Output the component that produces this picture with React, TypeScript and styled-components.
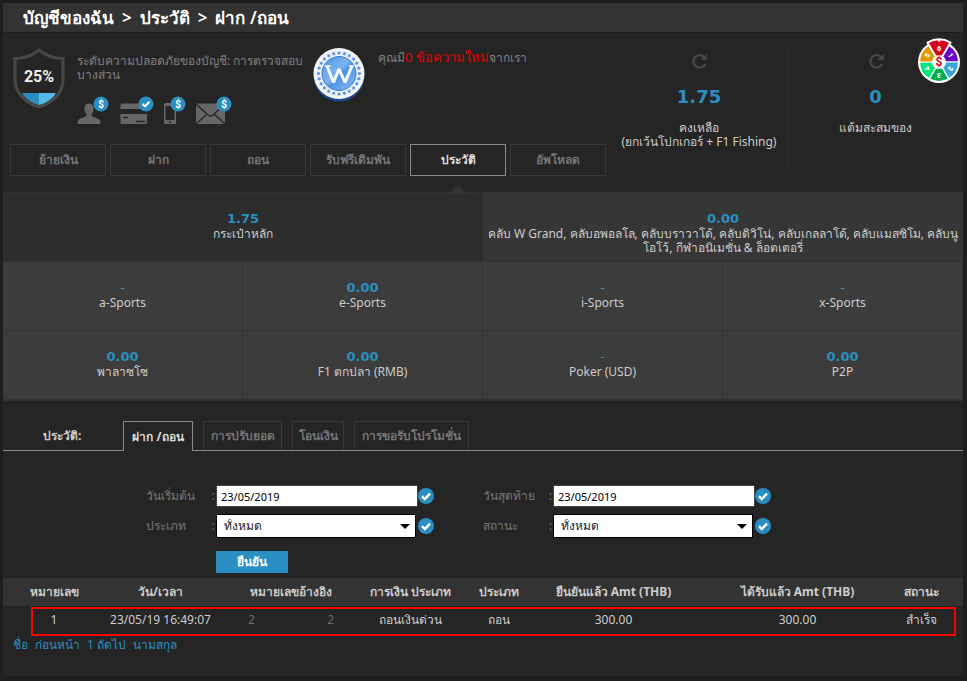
import React from "react";
import styled, { createGlobalStyle, css } from "styled-components";

const blue = "#2a8fc0";
const sans = `"Noto Sans", "DejaVu Sans", sans-serif`;
const bold = `"DejaVu Sans", "Noto Sans", sans-serif`;

const GlobalStyle = createGlobalStyle`
  *, *::before, *::after { box-sizing: border-box; }
  body {
    margin: 0;
    background: #1e1e1e;
    color: #ccc;
    font: 12px/14px ${sans};
  }
  button, input, select { font: inherit; }
`;

const Page = styled.main`
  margin: 3px 4px 5px 3px;
  min-height: calc(100vh - 8px);
  background: #252525;
`;

const TitleBar = styled.h1`
  display: flex;
  gap: 8px;
  margin: 0;
  height: 30px;
  padding-left: 20px;
  background: #333;
  border-bottom: 1px solid #1c1c1c;
  color: #fff;
  font-size: 17px;
  line-height: 30px;
  font-weight: 600;
`;

const Summary = styled.section`
  position: relative;
  display: flex;
  height: 159px;
`;

const Account = styled.div`
  flex: 1;
  display: flex;
  flex-direction: column;
  min-width: 0;
  padding-left: 7px;
`;

const AccountInfo = styled.div`
  display: flex;
  height: 111px;
  padding: 13px 0 0 3px;
`;

const Shield = styled.svg`
  flex: none;
  width: 52px;
  height: 64px;
`;

const Security = styled.div`
  flex: none;
  width: 248px;
  padding: 8px 8px 0 12px;
  color: #808080;
`;

const SecurityText = styled.p`
  margin: 0;
`;

const Verifications = styled.div`
  display: flex;
  margin-top: 14px;
`;

const VerifyIcon = styled.svg<{ $gap: number }>`
  flex: none;
  display: block;
  height: 30px;
  margin-right: ${(p) => p.$gap}px;
`;

const Medal = styled.svg`
  flex: none;
  width: 54px;
  height: 56px;
`;

const Message = styled.p`
  margin: 0;
  padding: 4px 0 0 11px;
  color: #808080;
  white-space: nowrap;
`;

const MessageLink = styled.a`
  color: #e60000;
  font-size: 13px;
  text-decoration: none;
`;

const Nav = styled.nav`
  display: flex;
  gap: 4px;
`;

const NavButton = styled.button<{ $active?: boolean }>`
  position: relative;
  width: 96px;
  height: 32px;
  padding: 0;
  background: transparent;
  border: 1px solid ${(p) => (p.$active ? "#8a8a8a" : "#383838")};
  color: ${(p) => (p.$active ? "#ddd" : "#757575")};
  font-weight: 700;
  ${(p) =>
    p.$active &&
    css`
      &::after {
        content: "";
        position: absolute;
        left: 38px;
        top: 40px;
        border: 9px solid transparent;
        border-top: 0;
        border-bottom-color: #333;
      }
    `}
`;

const Stat = styled.div`
  flex: none;
  width: 176px;
  height: 120px;
  margin-top: 12px;
  padding-top: 7px;
  display: flex;
  flex-direction: column;
  align-items: center;
  text-align: center;
  white-space: nowrap;
  & + & {
    border-left: 1px solid #303030;
  }
`;

const RefreshButton = styled.button`
  display: block;
  width: 18px;
  height: 18px;
  padding: 0;
  border: 0;
  background: transparent;
  svg {
    display: block;
  }
`;

const StatValue = styled.strong`
  margin: 16px 0 13px;
  color: ${blue};
  font: 700 18px/22px ${bold};
`;

const Wheel = styled.svg`
  position: absolute;
  top: 3px;
  right: 2px;
  width: 44px;
  height: 48px;
`;

const Wallets = styled.section`
  display: grid;
  grid-template-columns: repeat(4, 1fr);
  grid-auto-rows: 68px;
  row-gap: 1px;
  padding: 1px 0 2px;
  background: #333;
`;

const Wallet = styled.div<{ $tone?: "main" | "club" }>`
  grid-column: span ${(p) => (p.$tone ? 2 : 1)};
  padding-top: 18px;
  border-right: ${(p) => (p.$tone ? 0 : 1)}px solid #333;
  background: ${(p) =>
    p.$tone === "main" ? "#2d2d2d" : p.$tone === "club" ? "#363636" : "#3c3c3c"};
  text-align: center;
`;

const WalletValue = styled.strong<{ $empty: boolean }>`
  display: block;
  color: ${blue};
  font: ${(p) => (p.$empty ? 400 : 700)} 13px/16px ${bold};
`;

const WalletName = styled.span`
  display: block;
`;

const TabBar = styled.div`
  display: flex;
  align-items: flex-end;
  gap: 10px;
  height: 50px;
  border-bottom: 1px solid #8a8a8a;
`;

const TabLabel = styled.h2`
  width: 110px;
  margin: 0;
  padding: 0 0 7px 40px;
  font-size: 12px;
  line-height: 14px;
  font-weight: 700;
`;

const Tab = styled.button<{ $active?: boolean; $width: number }>`
  width: ${(p) => p.$width}px;
  height: ${(p) => (p.$active ? 30 : 29)}px;
  margin-bottom: ${(p) => (p.$active ? -1 : 0)}px;
  padding: 0;
  background: #252525;
  border: 1px solid ${(p) => (p.$active ? "#8a8a8a" : "#383838")};
  border-bottom: 0;
  color: ${(p) => (p.$active ? "#ddd" : "#757575")};
  font-weight: 700;
  white-space: nowrap;
`;

const Filters = styled.form`
  display: grid;
  grid-template-columns: 289px 289px;
  grid-template-rows: 24px 24px 30px;
  align-items: end;
  column-gap: 48px;
  row-gap: 6px;
  padding: 33px 0 4px 143px;
`;

const Field = styled.div`
  display: flex;
  align-items: center;
  height: 24px;
`;

const FieldLabel = styled.label`
  flex: none;
  display: flex;
  justify-content: space-between;
  width: 70px;
  padding-right: 1px;
  color: #777;
`;

const Control = styled.div`
  position: relative;
  width: 202px;
`;

const DateInput = styled.input`
  display: block;
  width: 202px;
  height: 22px;
  padding: 0 4px;
  border: 1px solid #444;
  background: #fff;
  color: #000;
  font-size: 11px;
`;

const Select = styled.select`
  display: block;
  width: 200px;
  height: 24px;
  padding: 0 7px;
  appearance: none;
  border: 1px solid #000;
  border-radius: 0;
  background: #fff;
  color: #222;
`;

const Caret = styled.svg`
  position: absolute;
  top: 10px;
  right: 8px;
  width: 10px;
  height: 5px;
  pointer-events: none;
`;

const Submit = styled.button`
  width: 72px;
  height: 22px;
  margin-left: 70px;
  padding: 0;
  border: 0;
  background: ${blue};
  color: #fff;
  font-weight: 700;
`;

const TableFrame = styled.div`
  position: relative;
  &::after {
    content: "";
    position: absolute;
    top: 29px;
    left: 28px;
    right: 7px;
    height: 29px;
    border: 2px solid #ff0000;
    pointer-events: none;
  }
`;

const Table = styled.table`
  width: 100%;
  table-layout: fixed;
  border-collapse: collapse;
  text-align: center;
  white-space: nowrap;
  thead {
    background: #333;
  }
  th,
  td {
    height: 28px;
    padding: 0;
  }
  th {
    font-weight: 700;
  }
  th:nth-child(7),
  td:nth-child(7) {
    padding-left: 32px;
  }
`;

const Col = styled.col<{ $width: number }>`
  width: ${(p) => p.$width / 9.6}%;
`;

const MaskedNumber = styled.span`
  display: flex;
  justify-content: space-between;
  width: 86px;
  margin: 0 auto;
  color: #6c6c6c;
`;

const Pager = styled.nav`
  display: flex;
  gap: 7px;
  padding: 4px 10px;
`;

const PageLink = styled.a`
  color: ${blue};
  text-decoration: none;
`;

const Badge = ({ x, check }: { x: number; check?: boolean }) => (
  <g transform={`translate(${x} 8)`}>
    <circle r="7.5" fill={blue} />
    {check ? (
      <path d="M-3.4 0 -1 2.4 3.4-2.2" fill="none" stroke="#fff" strokeWidth="2" />
    ) : (
      <text y="3.6" fill="#fff" fontFamily="Roboto" fontWeight="700" fontSize="10" textAnchor="middle">
        $
      </text>
    )}
  </g>
);

const CheckMark = () => (
  <svg width="16" height="16" viewBox="0 0 16 16" aria-hidden="true">
    <circle cx="8" cy="8" r="8" fill={blue} />
    <path d="M4 8.2 6.8 11 12 5.6" fill="none" stroke="#fff" strokeWidth="2.4" />
  </svg>
);

const Refresh = () => (
  <RefreshButton type="button" aria-label="รีเฟรช">
    <svg width="18" height="18" viewBox="0 0 18 18">
      <path d="M15.200 12A6.200 6.200 0 1 1 14 5" fill="none" stroke="#474747" strokeWidth="2.4" />
      <path d="M16.800 1.600V8H10.400Z" fill="#474747" />
    </svg>
  </RefreshButton>
);

const sectors = ["#d6001c", "#6a00c8", "#36a6d8", "#00b050", "#00e676", "#e09a00"];
const point = (deg: number, r: number) => {
  const a = (deg * Math.PI) / 180;
  return `${(22 + r * Math.sin(a)).toFixed(2)} ${(26 - r * Math.cos(a)).toFixed(2)}`;
};

const PrizeWheel = () => (
  <Wheel viewBox="0 0 44 48" aria-label="วงล้อ">
    <circle cx="22" cy="26" r="21" fill="#fff" />
    {sectors.map((fill, i) =>
      i === 0 ? null : (
        <g key={fill}>
          <path
            d={`M22 26 L${point(i * 60 - 30, 19.5)} A19.5 19.5 0 0 1 ${point(i * 60 + 30, 19.5)}Z`}
            fill={fill}
            stroke="#fff"
            strokeWidth="1.2"
          />
          <text
            x="22"
            y="15"
            transform={`rotate(${i * 60} 22 26)`}
            fill="#fff"
            fontFamily="Roboto"
            fontWeight="900"
            fontSize="7"
            textAnchor="middle"
          >
            {i}
          </text>
        </g>
      )
    )}
    <path
      d="M10.500 6.500A23 23 0 0 1 33.500 6.500L22 26Z"
      fill={sectors[0]}
      stroke="#fff"
      strokeWidth="2"
      strokeLinejoin="round"
    />
    <path d="M20.400 3.400h3.200L22 6.400Z" fill="#fff" />
    <text x="22" y="15" fill="#fff" fontFamily="Roboto" fontWeight="900" fontSize="7" textAnchor="middle">
      6
    </text>
    <circle cx="22" cy="26" r="7" fill="#fff" />
    <text x="22" y="30" fill="#d6001c" fontFamily="Roboto" fontWeight="700" fontSize="12" textAnchor="middle">
      $
    </text>
  </Wheel>
);

const star = "M0-2.4.7-.8 2.3-.7 1 .3 1.5 2 0 1-1.5 2-1 .3-2.3-.7-.7-.8Z";

const Medallion = () => (
  <Medal viewBox="0 0 54 56" aria-label="W">
    <defs>
      <linearGradient id="medal" x1="0" y1="0" x2="1" y2="1">
        <stop offset="0" stopColor="#4b8fe0" />
        <stop offset=".45" stopColor="#7db5f2" />
        <stop offset=".55" stopColor="#4f93e4" />
        <stop offset="1" stopColor="#8cc0f5" />
      </linearGradient>
    </defs>
    <circle cx="26" cy="30" r="25.500" fill="#174a8c" />
    <circle cx="26" cy="27.500" r="25.500" fill="#f3f3f3" />
    {Array.from({ length: 24 }, (_, i) => (
      <path key={i} d={star} fill="#4b8fe8" transform={`rotate(${i * 15} 26 27.5) translate(26 7)`} />
    ))}
    <circle cx="26" cy="27.500" r="17" fill="url(#medal)" stroke="#3d7fd0" strokeWidth="1" />
    <path
      d="M14 20 20.500 36.500 26 23 32 36.500 39 20"
      fill="none"
      stroke="#f5faff"
      strokeWidth="3"
      strokeLinejoin="bevel"
    />
    <path d="M11.500 20h6M36 20h5" stroke="#f5faff" strokeWidth="1.400" />
  </Medal>
);

const navItems = ["ย้ายเงิน", "ฝาก", "ถอน", "รับฟรีเดิมพัน", "ประวัติ", "อัพโหลด"];

const wallets: { value: string; name: string; tone?: "main" | "club" }[] = [
  { value: "1.75", name: "กระเป๋าหลัก", tone: "main" },
  {
    value: "0.00",
    name: "คลับ W Grand, คลับอพอลโล, คลับบราวาโด้, คลับดิวิโน่, คลับเกลลาโด้, คลับแมสซิโม, คลับนูโอโว้, กีฬาอนิเมชั่น & ล็อตเตอรี่",
    tone: "club",
  },
  { value: "-", name: "a-Sports" },
  { value: "0.00", name: "e-Sports" },
  { value: "-", name: "i-Sports" },
  { value: "-", name: "x-Sports" },
  { value: "0.00", name: "พาลาซโซ" },
  { value: "0.00", name: "F1 ตกปลา (RMB)" },
  { value: "-", name: "Poker (USD)" },
  { value: "0.00", name: "P2P" },
];

const tabs = [
  { name: "ฝาก /ถอน", width: 70 },
  { name: "การปรับยอด", width: 79 },
  { name: "โอนเงิน", width: 52 },
  { name: "การขอรับโปรโมชั่น", width: 115 },
];

const columns = [
  { name: "หมายเลข", width: 102 },
  { name: "วัน/เวลา", width: 111 },
  { name: "หมายเลขอ้างอิง", width: 150 },
  { name: "การเงิน ประเภท", width: 89 },
  { name: "ประเภท", width: 88 },
  { name: "ยืนยันแล้ว Amt (THB)", width: 141 },
  { name: "ได้รับแล้ว Amt (THB)", width: 195 },
  { name: "สถานะ", width: 84 },
];

const DateField = ({ id, label }: { id: string; label: string }) => (
  <Field>
    <FieldLabel htmlFor={id}>
      {label}
      <span>:</span>
    </FieldLabel>
    <Control>
      <DateInput id={id} type="text" defaultValue="23/05/2019" />
    </Control>
    <CheckMark />
  </Field>
);

const SelectField = ({ id, label }: { id: string; label: string }) => (
  <Field>
    <FieldLabel htmlFor={id}>
      {label}
      <span>:</span>
    </FieldLabel>
    <Control>
      <Select id={id}>
        <option>ทั้งหมด</option>
      </Select>
      <Caret viewBox="0 0 10 5" aria-hidden="true">
        <path d="M0 0h10L5 5Z" fill="#000" />
      </Caret>
    </Control>
    <CheckMark />
  </Field>
);

export default function App() {
  return (
    <>
      <GlobalStyle />
      <Page>
        <TitleBar>
          <span>บัญชีของฉัน</span>
          <span>&gt;</span>
          <span>ประวัติ</span>
          <span>&gt;</span>
          <span>ฝาก /ถอน</span>
        </TitleBar>

        <Summary>
          <Account>
            <AccountInfo>
              <Shield viewBox="0 0 52 64">
                <path
                  d="M26 4C20 9 11 12.500 2 12.500V34C2 47 13 57 26 61 39 57 50 47 50 34V12.500C41 12.500 32 9 26 4Z"
                  fill="#252525"
                  stroke="#484848"
                  strokeWidth="3"
                />
                <path d="M9 47H26V59C19 57 12.500 53 9 47Z" fill="#2a8fc0" />
                <path d="M26 47H43C39.500 53 33 57 26 59Z" fill="#55b9ea" />
                <text x="26" y="36" fill="#eee" fontFamily="Roboto" fontWeight="700" fontSize="16" textAnchor="middle">
                  25%
                </text>
              </Shield>
              <Security>
                <SecurityText>ระดับความปลอดภัยของบัญชี: การตรวจสอบบางส่วน</SecurityText>
                <Verifications>
                  <VerifyIcon $gap={11} width="32" viewBox="0 0 32 30">
                    <path
                      d="M12 7.500c3 0 4.600 2 4.600 5 0 2.500-.9 4.600-2 5.500v2.200l6.400 2.600c2 .8 2.400 2 2.400 5.200H.6c0-3.200.4-4.400 2.400-5.200l6.400-2.600V18c-1.100-.9-2-3-2-5.500 0-3 1.600-5 4.600-5Z"
                      fill="#666"
                    />
                    <Badge x={24} />
                  </VerifyIcon>
                  <VerifyIcon $gap={9} width="34" viewBox="0 0 34 30">
                    <path d="M1.500 7.500H27v5.500H.5V8.500ZM.5 18H27v9q0 1-1 1H1.500q-1 0-1-1Z" fill="#666" />
                    <path d="M3 21.500h5M16 25.500h9" stroke="#252525" strokeWidth="1.500" />
                    <Badge x={26} check />
                  </VerifyIcon>
                  <VerifyIcon $gap={9} width="23" viewBox="0 0 23 30">
                    <rect x="1" y="7" width="12" height="21" rx="1.500" fill="#666" />
                    <path d="M2.500 10h9v14h-9Z" fill="#252525" />
                    <circle cx="7" cy="26" r="1" fill="#252525" />
                    <Badge x={15} />
                  </VerifyIcon>
                  <VerifyIcon $gap={0} width="38" viewBox="0 0 38 30">
                    <path d="M1 7.500h29V28H1Z" fill="#666" />
                    <path
                      d="M1 8 13 19q2.500 2 5 0L30 8M1 28 12 18M30 28 19 18"
                      fill="none"
                      stroke="#252525"
                      strokeWidth="1.300"
                    />
                    <Badge x={29} />
                  </VerifyIcon>
                </Verifications>
              </Security>
              <Medallion />
              <Message>
                คุณมี<MessageLink href="#messages">0 ข้อความใหม่</MessageLink>จากเรา
              </Message>
            </AccountInfo>
            <Nav>
              {navItems.map((name) => (
                <NavButton key={name} type="button" $active={name === "ประวัติ"}>
                  {name}
                </NavButton>
              ))}
            </Nav>
          </Account>
          <Stat>
            <Refresh />
            <StatValue>1.75</StatValue>
            <span>คงเหลือ</span>
            <span>(ยกเว้นโปกเกอร์ + F1 Fishing)</span>
          </Stat>
          <Stat>
            <Refresh />
            <StatValue>0</StatValue>
            <span>แต้มสะสมของ</span>
          </Stat>
          <PrizeWheel />
        </Summary>

        <Wallets>
          {wallets.map((w) => (
            <Wallet key={w.name} $tone={w.tone}>
              <WalletValue $empty={w.value === "-"}>{w.value}</WalletValue>
              <WalletName>{w.name}</WalletName>
            </Wallet>
          ))}
        </Wallets>

        <TabBar>
          <TabLabel>ประวัติ:</TabLabel>
          {tabs.map((t, i) => (
            <Tab key={t.name} type="button" $active={i === 0} $width={t.width}>
              {t.name}
            </Tab>
          ))}
        </TabBar>

        <Filters onSubmit={(e) => e.preventDefault()}>
          <DateField id="start" label="วันเริ่มต้น" />
          <DateField id="end" label="วันสุดท้าย" />
          <SelectField id="type" label="ประเภท" />
          <SelectField id="status" label="สถานะ" />
          <Field>
            <Submit type="submit">ยืนยัน</Submit>
          </Field>
        </Filters>

        <TableFrame>
          <Table>
            <colgroup>
              {columns.map((c) => (
                <Col key={c.name} $width={c.width} />
              ))}
            </colgroup>
            <thead>
              <tr>
                {columns.map((c) => (
                  <th key={c.name} scope="col">
                    {c.name}
                  </th>
                ))}
              </tr>
            </thead>
            <tbody>
              <tr>
                <td>1</td>
                <td>23/05/19 16:49:07</td>
                <td>
                  <MaskedNumber>
                    <span>2</span>
                    <span>2</span>
                  </MaskedNumber>
                </td>
                <td>ถอนเงินด่วน</td>
                <td>ถอน</td>
                <td>300.00</td>
                <td>300.00</td>
                <td>สำเร็จ</td>
              </tr>
            </tbody>
          </Table>
        </TableFrame>

        <Pager>
          <PageLink href="#first">ชื่อ</PageLink>
          <PageLink href="#prev">ก่อนหน้า</PageLink>
          <PageLink href="#1">1 ถัดไป</PageLink>
          <PageLink href="#last">นามสกุล</PageLink>
        </Pager>
      </Page>
    </>
  );
}
